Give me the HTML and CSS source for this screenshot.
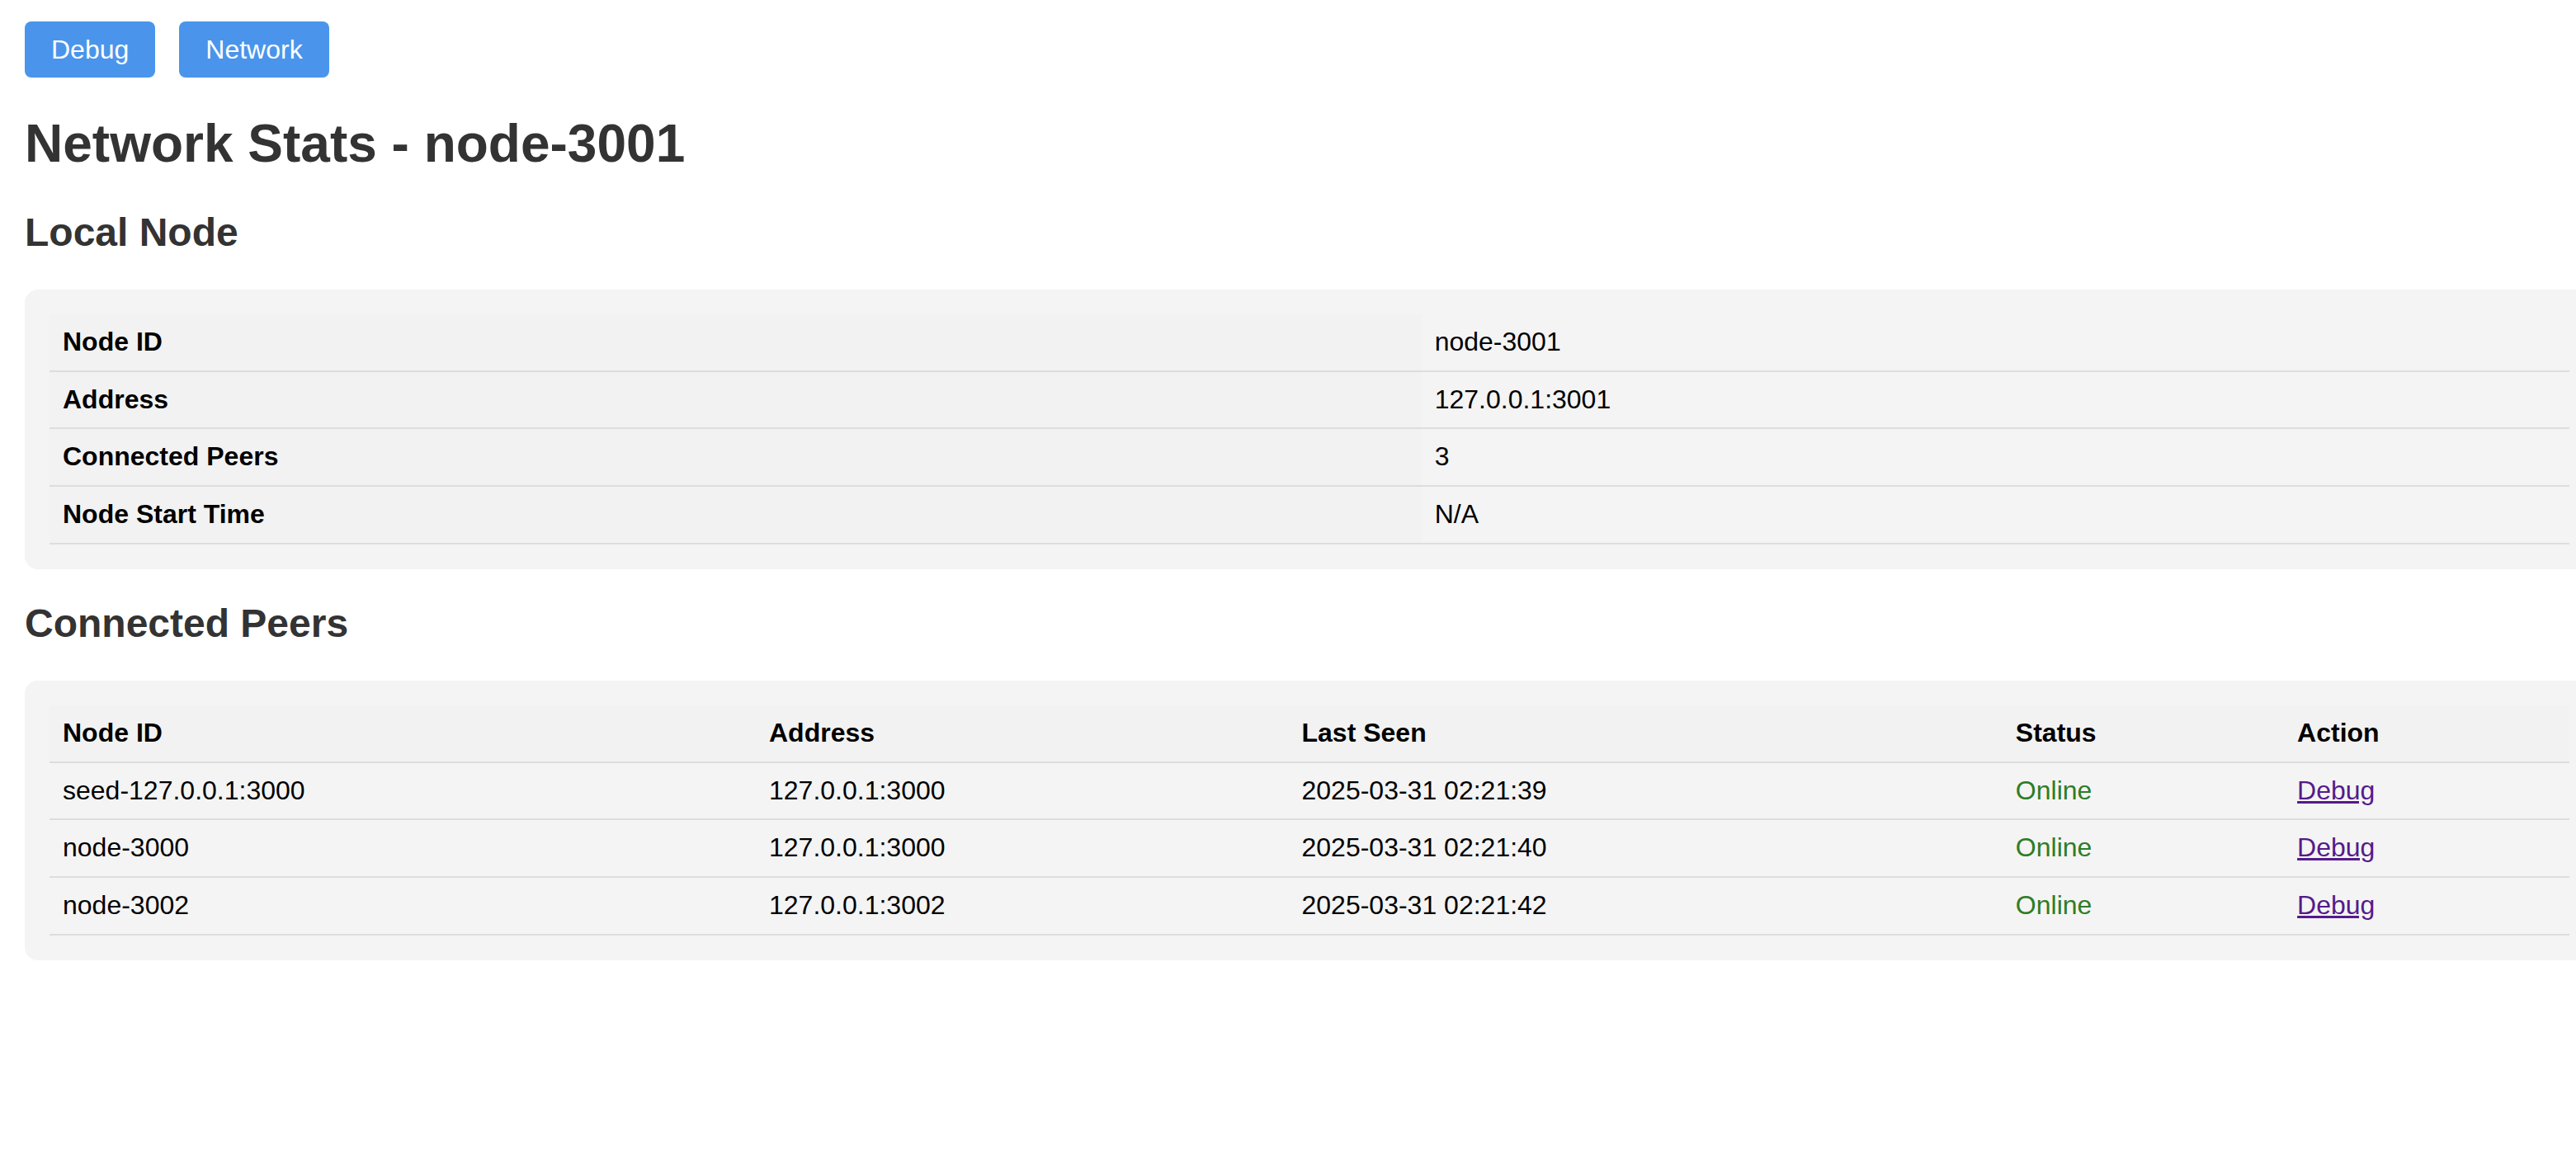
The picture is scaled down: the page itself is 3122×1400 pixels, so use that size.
FILE: index.html
```html
<!DOCTYPE html>
<html lang="en">
<head>
<meta charset="utf-8">
<title>Network Stats - node-3001</title>
<link rel="stylesheet" href="styles.css">
</head>
<body>
  <nav class="nav">
    <button class="btn">Debug</button>
    <button class="btn">Network</button>
  </nav>
  <h1 class="title">Network Stats - node-3001</h1>

  <h2 class="section-title">Local Node</h2>
  <div class="panel">
    <table class="table">
      <tr><th>Node ID</th><td>node-3001</td></tr>
      <tr><th>Address</th><td>127.0.0.1:3001</td></tr>
      <tr><th>Connected Peers</th><td>3</td></tr>
      <tr><th>Node Start Time</th><td>N/A</td></tr>
    </table>
  </div>

  <h2 class="section-title">Connected Peers</h2>
  <div class="panel">
    <table class="table">
      <tr><th>Node ID</th><th>Address</th><th>Last Seen</th><th>Status</th><th>Action</th></tr>
      <tr><td>seed-127.0.0.1:3000</td><td>127.0.0.1:3000</td><td>2025-03-31 02:21:39</td><td class="online">Online</td><td><a class="link" href="#">Debug</a></td></tr>
      <tr><td>node-3000</td><td>127.0.0.1:3000</td><td>2025-03-31 02:21:40</td><td class="online">Online</td><td><a class="link" href="#">Debug</a></td></tr>
      <tr><td>node-3002</td><td>127.0.0.1:3002</td><td>2025-03-31 02:21:42</td><td class="online">Online</td><td><a class="link" href="#">Debug</a></td></tr>
    </table>
  </div>
</body>
</html>
```
FILE: styles.css
```css
html {
  overflow-x: hidden;
}
body {
  margin: 0;
  padding: 26px 38px 0 30px;
  font-family: "Liberation Sans", Arial, sans-serif;
  font-size: 32px;
  color: #000;
  background: #fff;
}
.nav {
  display: flex;
  gap: 29px;
}
.btn {
  font-family: "Liberation Sans", Arial, sans-serif;
  font-size: 32px;
  line-height: 36px;
  padding: 16px 32px;
  border: none;
  border-radius: 8px;
  background: #4a95eb;
  color: #fff;
  cursor: pointer;
}
.title {
  font-size: 64px;
  font-weight: bold;
  color: #333;
  margin: 43px 0;
}
.section-title {
  font-size: 48px;
  font-weight: bold;
  color: #333;
  margin: 38px 0 40px;
}
.panel {
  width: 100%;
  padding: 30px;
  margin: 42px 0 38px;
  background: #f4f4f4;
  border-radius: 16px;
}
.table {
  width: 100%;
  border-collapse: collapse;
}
.table th,
.table td {
  padding: 16px;
  line-height: 35.7px;
  text-align: left;
  border-bottom: 2px solid #ddd;
}
.table th {
  background: #f2f2f2;
  font-weight: bold;
}
.online {
  color: #2e7d24;
}
.link {
  color: #551a8b;
  text-decoration: underline;
}
```
